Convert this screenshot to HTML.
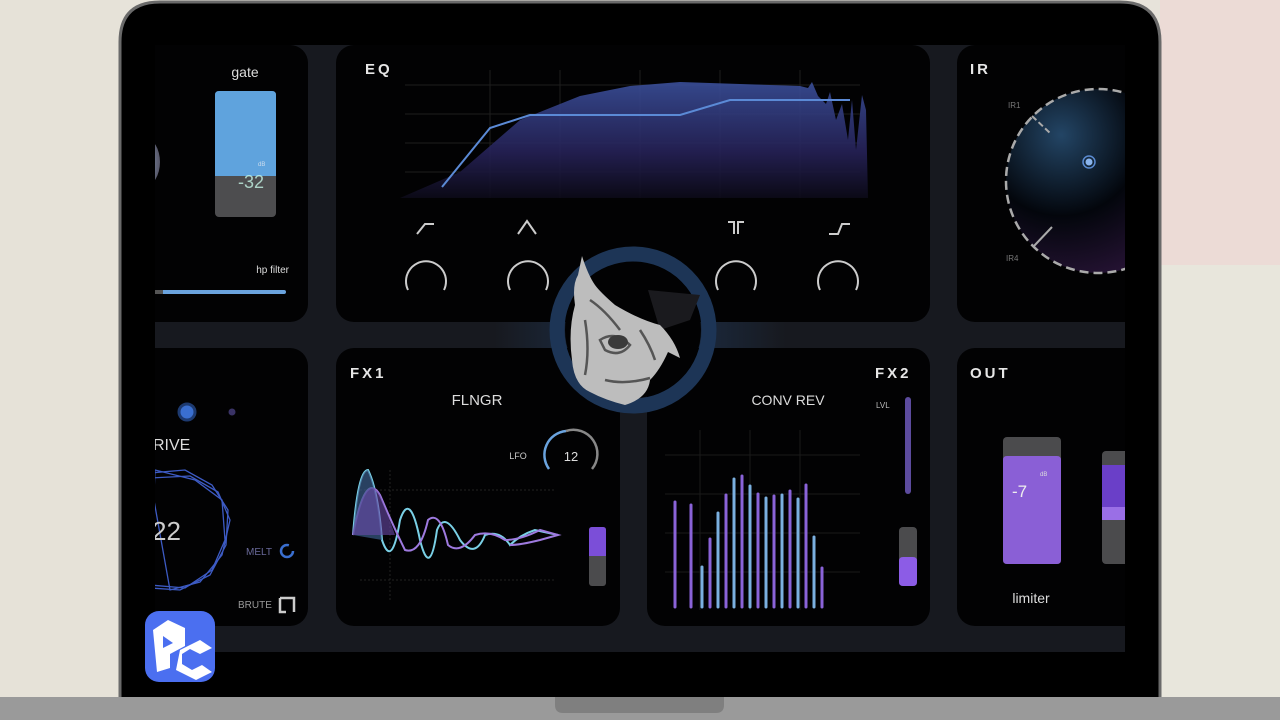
<!DOCTYPE html>
<html><head><meta charset="utf-8"><style>
html,body{margin:0;padding:0;width:1280px;height:720px;overflow:hidden;background:#e7e3da;font-family:"Liberation Sans",sans-serif}
</style></head><body>
<svg width="1280" height="720" viewBox="0 0 1280 720" xmlns="http://www.w3.org/2000/svg" font-family="Liberation Sans, sans-serif">
<defs>
<linearGradient id="eqg" x1="0" y1="0" x2="0" y2="1"><stop offset="0" stop-color="#3a4f9a"/><stop offset="0.6" stop-color="#262258"/><stop offset="1" stop-color="#0c0a18"/></linearGradient>
<radialGradient id="irg" cx="0.3" cy="0.25" r="0.8"><stop offset="0" stop-color="#234565"/><stop offset="0.55" stop-color="#03060c"/><stop offset="1" stop-color="#241232"/></radialGradient>
<linearGradient id="band" x1="0" y1="0" x2="1" y2="0"><stop offset="0" stop-color="#17191f"/><stop offset="0.35" stop-color="#17191f"/><stop offset="0.5" stop-color="#1d3350"/><stop offset="0.65" stop-color="#17191f"/><stop offset="1" stop-color="#17191f"/></linearGradient>
<radialGradient id="gk" cx="0.3" cy="0.5" r="0.7"><stop offset="0" stop-color="#9bb6d8"/><stop offset="1" stop-color="#556"/></radialGradient>
<clipPath id="scr"><rect x="155" y="45" width="970" height="607"/></clipPath>
</defs>
<rect x="1160" y="0" width="120" height="265" fill="#ecdbd6"/>
<rect x="1160" y="265" width="120" height="435" fill="#e8e6dc"/>
<rect x="0" y="0" width="120" height="700" fill="#e6e2d8"/>
<path d="M160 2 H1120 Q1160 2 1160 42 V700 H120 V42 Q120 2 160 2Z" fill="#000" stroke="#6a6a6a" stroke-width="3"/>
<rect x="0" y="697" width="1280" height="23" fill="#9a9a9a"/>
<path d="M555 697 H724 V705 Q724 713 716 713 H563 Q555 713 555 705Z" fill="#7f7f7f"/>
<g clip-path="url(#scr)">
<rect x="155" y="45" width="970" height="607" fill="#17191f"/>
<rect x="155" y="322" width="970" height="26" fill="url(#band)"/>
<rect x="130" y="45" width="178" height="277" rx="18" fill="#020203"/>
<rect x="336" y="45" width="594" height="277" rx="18" fill="#020203"/>
<rect x="957" y="45" width="200" height="277" rx="18" fill="#020203"/>
<rect x="130" y="348" width="178" height="278" rx="18" fill="#020203"/>
<rect x="336" y="348" width="284" height="278" rx="18" fill="#020203"/>
<rect x="647" y="348" width="283" height="278" rx="18" fill="#020203"/>
<rect x="957" y="348" width="200" height="278" rx="18" fill="#020203"/>
<!-- gate -->
<text x="245" y="77" fill="#ddd" font-size="14" text-anchor="middle">gate</text>
<rect x="215" y="91" width="61" height="126" rx="4" fill="#4d4d4f"/>
<path d="M219 91 H272 Q276 91 276 95 V176 H215 V95 Q215 91 219 91Z" fill="#5fa3dd"/>
<text x="238" y="188" fill="#cfe" font-size="18" opacity="0.75">-32</text>
<text x="258" y="166" fill="#cde" font-size="6">dB</text>
<ellipse cx="145" cy="162" rx="15" ry="24" fill="url(#gk)"/>
<text x="289" y="273" fill="#ddd" font-size="10" text-anchor="end">hp filter</text>
<rect x="155" y="290" width="131" height="4" rx="2" fill="#6aa3de"/>
<rect x="155" y="290" width="8" height="4" fill="#555"/>
<!-- EQ -->
<text x="365" y="74" fill="#e6e6e6" font-size="15" font-weight="bold" letter-spacing="3">EQ</text>
<g stroke="#1e1e1e" stroke-width="1">
<line x1="405" y1="85" x2="860" y2="85"/><line x1="405" y1="114" x2="860" y2="114"/><line x1="405" y1="143" x2="860" y2="143"/><line x1="405" y1="172" x2="860" y2="172"/>
<line x1="490" y1="70" x2="490" y2="198"/><line x1="560" y1="70" x2="560" y2="198"/><line x1="640" y1="70" x2="640" y2="198"/><line x1="720" y1="70" x2="720" y2="198"/><line x1="800" y1="70" x2="800" y2="198"/>
</g>
<path d="M400 198 L460 172 L520 120 L580 96 L630 86 L680 82 L740 84 L800 86 L808 88 L812 82 L818 96 L826 104 L830 92 L836 120 L842 104 L848 140 L852 100 L856 150 L862 95 L866 110 L868 198Z" fill="url(#eqg)" opacity="0.9"/>
<path d="M442 187 L490 128 L530 115 L680 115 L730 100 L850 100" fill="none" stroke="#5b8ad6" stroke-width="2"/>
<g fill="none" stroke="#ccc" stroke-width="2">
<path d="M417 234 L425 224 H434"/><path d="M518 234 L527 221 L536 234"/><path d="M728 222 H734 V234 M738 234 V222 H744"/><path d="M829 234 H838 L842 224 H850"/>
<path d="M408 290 A20 20 0 1 1 444 290"/><path d="M510 290 A20 20 0 1 1 546 290"/><path d="M718 290 A20 20 0 1 1 754 290"/><path d="M820 290 A20 20 0 1 1 856 290"/>
</g>
<!-- IR -->
<text x="970" y="74" fill="#e6e6e6" font-size="15" font-weight="bold" letter-spacing="3">IR</text>
<circle cx="1098" cy="181" r="92" fill="url(#irg)" stroke="#aaa" stroke-width="2.5" stroke-dasharray="9 5"/>
<line x1="1032" y1="116" x2="1050" y2="133" stroke="#aaa" stroke-width="2" stroke-dasharray="6 3"/>
<line x1="1034" y1="246" x2="1052" y2="227" stroke="#aaa" stroke-width="2"/>
<text x="1008" y="108" fill="#777" font-size="8">IR1</text>
<text x="1006" y="261" fill="#777" font-size="8">IR4</text>
<circle cx="1089" cy="162" r="6" fill="none" stroke="#5a8ad0" stroke-width="1.5"/><circle cx="1089" cy="162" r="3.5" fill="#8ab4ec"/>
<!-- drive -->
<circle cx="187" cy="412" r="8" fill="#3a6fd0" stroke="#1d3a70" stroke-width="3"/>
<circle cx="232" cy="412" r="3.5" fill="#3a3366"/>
<text x="153" y="450" fill="#ddd" font-size="16">RIVE</text>
<g fill="none" stroke="#3d5bc4" stroke-width="1.3">
<polygon points="150,473 185,470 212,485 228,510 226,545 210,575 180,590 150,588"/>
<polygon points="150,478 190,476 218,492 230,520 222,555 200,582 170,590"/>
<polygon points="155,470 195,480 222,500 225,540 212,570 185,588 150,585"/>
</g>
<text x="152" y="540" fill="#ccc" font-size="26">22</text>
<text x="246" y="555" fill="#6a6a9a" font-size="10">MELT</text>
<circle cx="287" cy="551" r="6" fill="none" stroke="#3a6fd0" stroke-width="2.5" stroke-dasharray="30 8"/>
<text x="238" y="608" fill="#999" font-size="10">BRUTE</text>
<path d="M280 598 H294 V612 M286 612 H280 V598" fill="none" stroke="#ccc" stroke-width="2.5"/>
<!-- FX1 -->
<text x="350" y="378" fill="#e6e6e6" font-size="15" font-weight="bold" letter-spacing="3">FX1</text>
<text x="477" y="405" fill="#ddd" font-size="15" text-anchor="middle">FLNGR</text>
<text x="518" y="459" fill="#ccc" font-size="9" text-anchor="middle">LFO</text>
<path d="M549 469 A24 24 0 0 1 566 431" fill="none" stroke="#6aa3de" stroke-width="2.5"/>
<path d="M566 431 A24 24 0 0 1 592 469" fill="none" stroke="#888" stroke-width="2.5"/>
<text x="571" y="461" fill="#ddd" font-size="13" text-anchor="middle">12</text>
<g stroke="#222" stroke-dasharray="2 2"><line x1="360" y1="490" x2="555" y2="490"/><line x1="360" y1="580" x2="555" y2="580"/><line x1="390" y1="470" x2="390" y2="600"/></g>
<path d="M353 535 Q358 470 368 470 Q378 490 382 540 Q392 570 400 520 Q410 490 420 540 Q430 580 437 530 Q445 510 460 540 Q475 560 485 535 Q500 530 510 545 Q520 535 535 530 L558 535" fill="none" stroke="#7ad0e6" stroke-width="2"/>
<path d="M353 535 Q365 470 380 495 Q395 530 405 550 Q420 555 428 520 Q440 510 448 545 Q460 555 475 535 Q490 530 505 540 Q520 540 540 530 L558 535 L540 540 Q520 545 510 545" fill="none" stroke="#9e7adf" stroke-width="2"/>
<path d="M353 535 Q358 470 368 470 Q378 490 382 540 Z" fill="#3a5d8a" opacity="0.7"/>
<path d="M353 535 Q365 470 380 495 Q390 520 395 535 Z" fill="#6a4aa8" opacity="0.6"/>
<rect x="589" y="527" width="17" height="59" rx="3" fill="#4b4b4d"/>
<path d="M592 527 H603 Q606 527 606 530 V556 H589 V530 Q589 527 592 527Z" fill="#7b4ed8"/>
<!-- FX2 -->
<text x="875" y="378" fill="#e6e6e6" font-size="15" font-weight="bold" letter-spacing="3">FX2</text>
<text x="788" y="405" fill="#ddd" font-size="14" text-anchor="middle">CONV REV</text>
<text x="876" y="408" fill="#bbb" font-size="8">LVL</text>
<rect x="905" y="397" width="6" height="97" rx="3" fill="#5c4b9e"/>
<rect x="899" y="527" width="18" height="59" rx="4" fill="#4b4b4d"/>
<path d="M903 557 H913 Q917 557 917 561 V582 Q917 586 913 586 H903 Q899 586 899 582 V561 Q899 557 903 557Z" fill="#8c5ce6"/>
<g stroke="#1a1a1a"><line x1="665" y1="455" x2="860" y2="455"/><line x1="665" y1="494" x2="860" y2="494"/><line x1="665" y1="533" x2="860" y2="533"/><line x1="665" y1="572" x2="860" y2="572"/><line x1="700" y1="430" x2="700" y2="610"/><line x1="750" y1="430" x2="750" y2="610"/><line x1="800" y1="430" x2="800" y2="610"/></g>
<g stroke-width="3" stroke-linecap="round">
<line x1="675" y1="502" x2="675" y2="607" stroke="#8a63d8"/><line x1="691" y1="505" x2="691" y2="607" stroke="#8a63d8"/>
<line x1="702" y1="567" x2="702" y2="607" stroke="#7bb0e0"/><line x1="710" y1="539" x2="710" y2="607" stroke="#8a63d8"/>
<line x1="718" y1="513" x2="718" y2="607" stroke="#7bb0e0"/><line x1="726" y1="495" x2="726" y2="607" stroke="#8a63d8"/>
<line x1="734" y1="479" x2="734" y2="607" stroke="#7bb0e0"/><line x1="742" y1="476" x2="742" y2="607" stroke="#8a63d8"/>
<line x1="750" y1="486" x2="750" y2="607" stroke="#7bb0e0"/><line x1="758" y1="494" x2="758" y2="607" stroke="#8a63d8"/>
<line x1="766" y1="498" x2="766" y2="607" stroke="#7bb0e0"/><line x1="774" y1="496" x2="774" y2="607" stroke="#8a63d8"/>
<line x1="782" y1="495" x2="782" y2="607" stroke="#7bb0e0"/><line x1="790" y1="491" x2="790" y2="607" stroke="#8a63d8"/>
<line x1="798" y1="499" x2="798" y2="607" stroke="#7bb0e0"/><line x1="806" y1="485" x2="806" y2="607" stroke="#8a63d8"/>
<line x1="814" y1="537" x2="814" y2="607" stroke="#7bb0e0"/><line x1="822" y1="568" x2="822" y2="607" stroke="#8a63d8"/>
</g>
<!-- OUT -->
<text x="970" y="378" fill="#e6e6e6" font-size="15" font-weight="bold" letter-spacing="3">OUT</text>
<rect x="1003" y="437" width="58" height="127" rx="4" fill="#4b4b4d"/>
<path d="M1007 456 H1057 Q1061 456 1061 460 V560 Q1061 564 1057 564 H1007 Q1003 564 1003 560 V460 Q1003 456 1007 456Z" fill="#8a5fd6"/>
<text x="1012" y="497" fill="#eee" font-size="17">-7</text>
<text x="1040" y="476" fill="#ddd" font-size="6">dB</text>
<rect x="1102" y="451" width="40" height="113" rx="4" fill="#4b4b4d"/>
<rect x="1102" y="465" width="40" height="55" fill="#6a3fc8"/>
<rect x="1102" y="507" width="40" height="13" fill="#9a6fe6"/>
<text x="1031" y="603" fill="#ddd" font-size="14" text-anchor="middle">limiter</text>
<!-- center ring + skull -->
<circle cx="633" cy="330" r="76" fill="none" stroke="#1d3556" stroke-width="15"/>
<circle cx="633" cy="330" r="68" fill="#020203"/>
<path d="M648 290 L700 295 L690 320 L660 330Z" fill="#1a1a1e"/>
<path d="M582 256 Q588 275 595 285 Q600 292 615 305 Q640 320 660 325 Q675 340 680 358 L668 352 Q660 370 650 380 Q648 398 625 405 Q605 400 590 392 Q574 385 572 360 Q568 330 575 305 Q572 285 578 275Z" fill="#bdbdbd"/>
<path d="M590 300 Q605 310 620 330 M600 340 Q615 330 630 345 Q620 358 605 350Z M605 380 Q625 385 650 378 M585 320 Q590 350 585 375 M640 330 Q650 345 655 360" fill="none" stroke="#555" stroke-width="2.5"/>
<ellipse cx="618" cy="342" rx="10" ry="7" fill="#3a3a3a"/>
</g>
<!-- logo -->
<rect x="145" y="611" width="70" height="71" rx="14" fill="#4b6ff0"/>
<path d="M153 630 L168 620 L185 628 L185 646 L170 654 L170 668 L157 672 L153 630Z M163 636 L163 648 L173 643 Z" fill="#fff" fill-rule="evenodd"/>
<path d="M180 650 L200 640 L212 648 L200 654 L190 649 L182 654 L182 664 L192 670 L202 665 L212 672 L196 680 L176 670Z" fill="#fff"/>
</svg>
</body></html>
